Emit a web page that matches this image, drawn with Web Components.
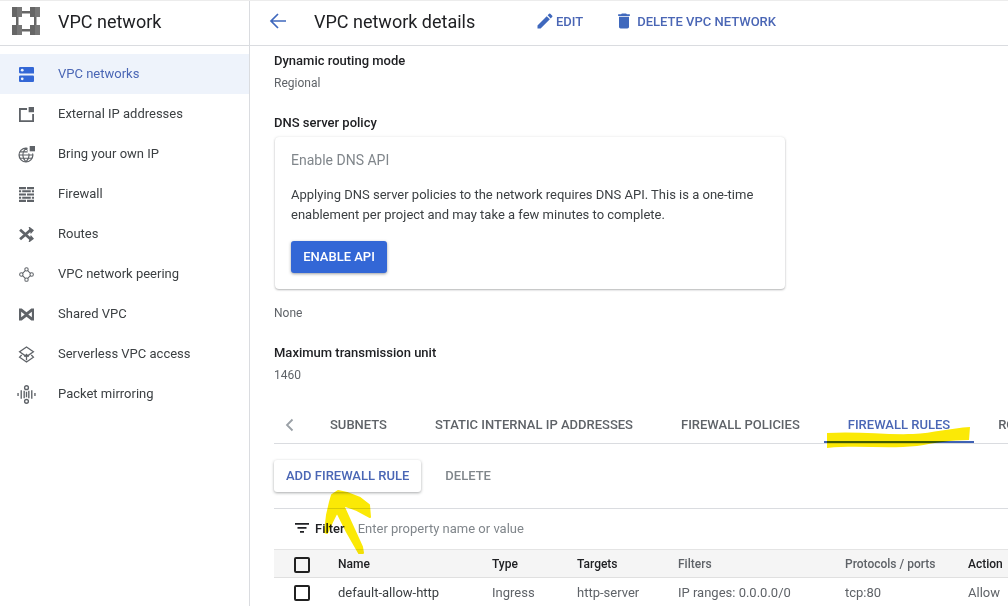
<!DOCTYPE html>
<html>
<head>
<meta charset="utf-8">
<title>VPC network details</title>
<style>
  html, body { margin: 0; height: 100%; overflow: hidden; background: #fff; }
  body { font: 13px Roboto, "Liberation Sans", sans-serif; color: #202124; }
</style>
</head>
<body>
<template id="nav-icons">
  <svg data-icon="networks" viewBox="0 0 14 14"><path fill="currentColor" fill-rule="evenodd" d="M1 0h12a1 1 0 0 1 1 1v5H1a1 1 0 0 1-1-1V1a1 1 0 0 1 1-1zM1 8h12a1 1 0 0 1 1 1v4a1 1 0 0 1-1 1H1a1 1 0 0 1-1-1V9a1 1 0 0 1 1-1z"/><circle cx="3" cy="3" r="1.300" fill="#eef3fb"/><circle cx="3" cy="11" r="1.300" fill="#eef3fb"/></svg>
  <svg data-icon="external" viewBox="0 0 14 14"><path fill="currentColor" d="M0 1h7.500v1.700H1.700v9.600h10.600V6.500H14V14H0zM9 0h5v5H9z"/></svg>
  <svg data-icon="byoip" viewBox="0 0 16 16"><circle cx="7.500" cy="8.500" r="6.500" fill="none" stroke="currentColor" stroke-width="1.200"/><path fill="none" stroke="currentColor" stroke-width="1.100" d="M7.500 2c-4 4-4 9 0 13M7.500 2c4 4 4 9 0 13M1 8.500h13M2 5.500h11M2 11.500h11"/><path fill="#fff" d="M9 0h7v7H9z"/><path fill="currentColor" d="M11 0h5v5h-5z"/></svg>
  <svg data-icon="firewall" viewBox="0 0 14 14"><path fill="currentColor" d="M0 0h6.500v2H0zM7.500 0H14v2H7.500zM0 3h2v2H0zM3 3h8v2H3zM12 3h2v2h-2zM0 6h6.500v2H0zM7.500 6H14v2H7.500zM0 9h2v2H0zM3 9h8v2H3zM12 9h2v2h-2zM0 12h6.500v2H0zM7.500 12H14v2H7.500z"/></svg>
  <svg data-icon="routes" viewBox="0 0 14 14"><path fill="none" stroke="currentColor" stroke-width="2.600" d="M1 2.500 11 11.500M1 11.500 11 2.500"/><path fill="currentColor" d="M9 0h1l4 3-3 3.500zM11 7.500 14 11l-4 3H9z"/></svg>
  <svg data-icon="peering" viewBox="0 0 16 16" fill="none" stroke="currentColor" stroke-width="1.100"><circle cx="8" cy="2.500" r="1.800"/><circle cx="8" cy="13.500" r="1.800"/><circle cx="2.500" cy="8" r="1.800"/><circle cx="13.500" cy="8" r="1.800"/><path d="M6.700 3.800 3.800 6.700M9.300 3.800l2.900 2.900M3.800 9.300l2.900 2.900M12.200 9.300l-2.900 2.900"/></svg>
  <svg data-icon="shared" viewBox="0 0 14 14"><path fill="currentColor" fill-rule="evenodd" d="M0 1.500h2.500L7 5l4.500-3.500H14v11h-2.500L7 9l-4.500 3.500H0zM2 4.500v5L5.300 7zM12 4.500 8.700 7l3.300 2.500z"/></svg>
  <svg data-icon="serverless" viewBox="0 0 16 16" fill="none" stroke="currentColor" stroke-width="1.200"><path d="M8 1 14.500 5.500 8 10 1.500 5.500z"/><path d="M3.500 8.500 1.500 10.500 8 15l6.500-4.500-2-2"/><path d="M8 13.500V8M6 10l2-2 2 2"/></svg>
  <svg data-icon="mirroring" viewBox="0 0 18 18" fill="none" stroke="currentColor" stroke-width="1.300"><circle cx="9" cy="2.500" r="1.800"/><circle cx="9" cy="15.500" r="1.800"/><path d="M1 7.500v3M4 5v8M6.800 5.500v7M9 6.500v5M11.200 5.500v7M14 5v8M17 7.500v3"/></svg>
</template>

<vpc-app></vpc-app>

<script>
  class VpcApp extends HTMLElement {
    constructor() {
      super();
      this.attachShadow({ mode: 'open' });
      this.shadowRoot.innerHTML = `
        <style>
          :host {
            display: grid;
            grid-template-columns: 250px 1fr;
            position: relative;
            height: 606px;
            overflow: hidden;
          }
          #marks { position: absolute; left: 0; top: 0; width: 1008px; height: 606px; pointer-events: none; mix-blend-mode: multiply; }
          #strip { position: absolute; left: 0; top: 0; right: 0; height: 1px; background: #ececec; }
        </style>
        <vpc-sidebar></vpc-sidebar>
        <vpc-details></vpc-details>
        <div id="strip"></div>
        <svg id="marks" viewBox="0 0 1008 606">
          <path fill="#fbe906" d="M827 433c30-2 58 2 86 1 20-1 38-6 57-7l-1 13c-18 0-34 3-52 6-30 3-60-1-90 2z"/>
          <path fill="#fbe906" stroke="#fbe906" stroke-width="2" stroke-linejoin="round" d="M332 495l6-4 9 2 13 5 9 7 1 12-13-7-14-5 9 20 10 22 1 6h-4l-12-21-10-20-5 10-5 11-2-1 2-17 3-13z"/>
        </svg>
      `;
    }
  }

  class VpcSidebar extends HTMLElement {
    constructor() {
      super();
      this.attachShadow({ mode: 'open' });
      const items = [
        ['networks', 'VPC networks'],
        ['external', 'External IP addresses'],
        ['byoip', 'Bring your own IP'],
        ['firewall', 'Firewall'],
        ['routes', 'Routes'],
        ['peering', 'VPC network peering'],
        ['shared', 'Shared VPC'],
        ['serverless', 'Serverless VPC access'],
        ['mirroring', 'Packet mirroring'],
      ];
      this.shadowRoot.innerHTML = `
        <style>
          :host { display: block; border-right: 1px solid #dadce0; }
          header {
            height: 42px;
            padding: 0 0 3px 12px;
            display: flex;
            align-items: center;
            gap: 18px;
            border-bottom: 1px solid #dadce0;
            font-size: 18px;
            color: #202124;
          }
          nav { display: flex; flex-direction: column; padding-top: 8px; }
          svg { width: 28px; height: 28px; display: block; }
        </style>
        <header>
          <svg viewBox="0 0 28 28">
            <path fill="#666" d="M10 4h8v2.500h-8zM10 22h8v2.500h-8zM4 10h2.500v8H4zM22 10h2.500v8H22z"/>
            <path fill="#666" d="M0 0h5v10H0zM18 0h5v10h-5zM0 18h5v10H0zM18 18h5v10h-5z"/>
            <path fill="#777" d="M5 0h5v10H5zM23 0h5v10h-5zM5 18h5v10H5zM23 18h5v10h-5z"/>
          </svg>
          <span>VPC network</span>
        </header>
        <nav>
          ${items.map(([icon, label], i) =>
            `<vpc-nav-item icon="${icon}"${i === 0 ? ' active' : ''}>${label}</vpc-nav-item>`).join('')}
        </nav>
      `;
    }
  }

  class VpcNavItem extends HTMLElement {
    constructor() {
      super();
      this.attachShadow({ mode: 'open' });
      this.shadowRoot.innerHTML = `
        <style>
          :host {
            display: flex;
            align-items: center;
            height: 40px;
            color: #3c4043;
          }
          :host([active]) { background: #eef3fb; color: #4a66b5; }
          #icon {
            width: 58px;
            flex: none;
            display: flex;
            justify-content: center;
            padding-right: 5px;
            box-sizing: border-box;
            color: #5f6368;
          }
          :host([active]) #icon { color: #3367d6; }
          #icon svg { width: 15px; height: 15px; display: block; }
          :host([icon="byoip"]) #icon svg,
          :host([icon="serverless"]) #icon svg { width: 17px; height: 17px; }
          :host([icon="mirroring"]) #icon svg { width: 19px; height: 19px; }
          #label { padding-bottom: 2px; }
        </style>
        <div id="icon"></div>
        <div id="label"><slot></slot></div>
      `;
    }

    connectedCallback() {
      const tpl = document.getElementById('nav-icons');
      const svg = tpl.content.querySelector(`[data-icon="${this.getAttribute('icon')}"]`);
      this.shadowRoot.getElementById('icon').replaceChildren(svg.cloneNode(true));
    }
  }

  class VpcDetails extends HTMLElement {
    constructor() {
      super();
      this.attachShadow({ mode: 'open' });
      this.shadowRoot.innerHTML = `
        <style>
          :host { display: block; min-width: 0; overflow: hidden; }
          header {
            height: 42px;
            padding: 0 0 3px 19px;
            display: flex;
            align-items: center;
            border-bottom: 1px solid #dadce0;
            white-space: nowrap;
          }
          header svg { display: block; flex: none; }
          h1 { font: 400 18px Roboto, sans-serif; color: #202124; margin: 0 0 0 27px; width: 221px; }
          .act { display: flex; align-items: center; color: #4a66b5; font-weight: 500; }
          .edit { gap: 1px; margin-right: 31px; }
          .del { gap: 3px; }
          #body { padding: 6px 0 0 24px; }
          .label { font-weight: 500; color: #202124; line-height: 18px; }
          .value { color: #5f6368; font-size: 12px; line-height: 16px; }
          .card {
            width: 510px;
            height: 152px;
            box-sizing: border-box;
            margin: 5px 0 0 1px;
            padding: 14px 16px;
            border-radius: 4px;
            box-shadow: 0 1px 2px rgba(60,64,67,.35), 0 0 3px rgba(60,64,67,.1);
          }
          .card h2 { font: 400 14px Roboto, sans-serif; color: #80868b; margin: 0; line-height: 18px; }
          .card p { margin: 16px 0; line-height: 20px; color: #3c4043; width: 490px; white-space: nowrap; }
          .primary {
            display: inline-flex; align-items: center; justify-content: center;
            width: 96px; height: 32px; padding-bottom: 2px; box-sizing: border-box; border-radius: 3px;
            background: #3367d6; color: #fff; font-weight: 500;
            box-shadow: 0 1px 3px rgba(60,64,67,.5);
          }
          nav {
            margin: 21px 0 0 0;
            height: 39px;
            display: flex;
            align-items: stretch;
            border-bottom: 1px solid #dadce0;
            white-space: nowrap;
            overflow: hidden;
          }
          .chev { width: 32px; flex: none; display: flex; align-items: center; padding-left: 11px; box-sizing: border-box; padding-top: 2px; }
          .tab { display: flex; align-items: center; padding: 2px 24px 0; color: #5f6368; font-weight: 500; box-sizing: border-box; }
          .tab.on { color: #4a66b5; box-shadow: inset 0 -2px 0 #3f62b5; }
          .tools { height: 64px; display: flex; align-items: center; border-bottom: 1px solid #dadce0; }
          .tools span { font-weight: 500; }
          .raised {
            height: 32px; padding: 0 12px 2px; box-sizing: border-box; display: flex; align-items: center;
            border-radius: 3px; color: #4a66b5;
            box-shadow: 0 1px 3px rgba(60,64,67,.45);
          }
          .flat { color: #80868b; margin: 0 0 2px 24px; }
          .filter { height: 38px; padding-bottom: 2px; display: flex; align-items: center; padding-left: 21px; white-space: nowrap; }
          .filter b { font-weight: 500; margin-left: 6px; color: #202124; }
          .filter i { font-style: normal; color: #80868b; margin-left: 13px; }
          .row {
            display: grid;
            grid-template-columns: 64px 154px 85px 101px 167px 123px 60px;
            align-items: center;
            white-space: nowrap;
            color: #5f6368;
          }
          .row.head { height: 29px; background: #f5f5f5; border-top: 1px solid #e4e4e4; border-bottom: 1px solid #e0e0e0; box-sizing: border-box; font-weight: 500; font-size: 12px; }
          .row.item { height: 28px; }
          .row .dark { color: #202124; }
          .row .name { color: #3c4043; }
          .box { width: 12px; height: 12px; border: 2px solid #212121; border-radius: 2px; margin: 2px 0 0 20px; }
        </style>
        <header>
          <svg width="18" height="18" viewBox="0 0 18 18"><path fill="none" stroke="#3f68bd" stroke-width="1.700" d="M17 9H2M9 2 2 9l7 7"/></svg>
          <h1>VPC network details</h1>
          <div class="act edit">
            <svg width="20" height="20" viewBox="0 0 24 24"><path fill="#3f68bd" d="M3 17.250V21h3.750L17.810 9.940l-3.750-3.750L3 17.250zM20.710 7.040a1 1 0 0 0 0-1.410l-2.340-2.340a1 1 0 0 0-1.410 0l-1.830 1.830 3.750 3.750 1.830-1.830z"/></svg>
            <span>EDIT</span>
          </div>
          <div class="act del">
            <svg width="20" height="20" viewBox="0 0 24 24"><path fill="#3f68bd" d="M6 19c0 1.100.9 2 2 2h8c1.100 0 2-.9 2-2V7H6v12zM19 4h-3.500l-1-1h-5l-1 1H5v2h14V4z"/></svg>
            <span>DELETE VPC NETWORK</span>
          </div>
        </header>
        <div id="body">
          <div class="label">Dynamic routing mode</div>
          <div class="value" style="margin-top:5px">Regional</div>
          <div class="label" style="margin-top:23px">DNS server policy</div>
          <div class="card">
            <h2>Enable DNS API</h2>
            <p>Applying DNS server policies to the network requires DNS API. This is a one-time<br>enablement per project and may take a few minutes to complete.</p>
            <div class="primary">ENABLE API</div>
          </div>
          <div class="value" style="margin-top:16px">None</div>
          <div class="label" style="margin-top:23px">Maximum transmission unit</div>
          <div class="value" style="margin-top:5px">1460</div>
          <nav>
            <div class="chev"><svg width="9" height="14" viewBox="0 0 9 14"><path fill="none" stroke="#9aa0a6" stroke-width="1.800" d="M7.500 1.500 2 7l5.500 5.500"/></svg></div>
            <div class="tab">SUBNETS</div>
            <div class="tab">STATIC INTERNAL IP ADDRESSES</div>
            <div class="tab">FIREWALL POLICIES</div>
            <div class="tab on">FIREWALL RULES</div>
            <div class="tab">ROUTES</div>
          </nav>
          <div class="tools">
            <span class="raised">ADD FIREWALL RULE</span>
            <span class="flat">DELETE</span>
          </div>
          <div class="filter">
            <svg width="14" height="10" viewBox="0 0 14 10"><path fill="#202124" d="M0 0h14v1.700H0zM2.500 4h9v1.700h-9zM5 8h4v1.700H5z"/></svg>
            <b>Filter</b>
            <i>Enter property name or value</i>
          </div>
          <div class="row head">
            <div class="box"></div><div class="dark">Name</div><div class="dark">Type</div><div class="dark">Targets</div><div>Filters</div><div>Protocols / ports</div><div class="dark">Action</div>
          </div>
          <div class="row item">
            <div class="box"></div><div class="name">default-allow-http</div><div>Ingress</div><div>http-server</div><div>IP ranges: 0.0.0.0/0</div><div>tcp:80</div><div>Allow</div>
          </div>
        </div>
      `;
    }
  }

  customElements.define('vpc-nav-item', VpcNavItem);
  customElements.define('vpc-sidebar', VpcSidebar);
  customElements.define('vpc-details', VpcDetails);
  customElements.define('vpc-app', VpcApp);
</script>
</body>
</html>
